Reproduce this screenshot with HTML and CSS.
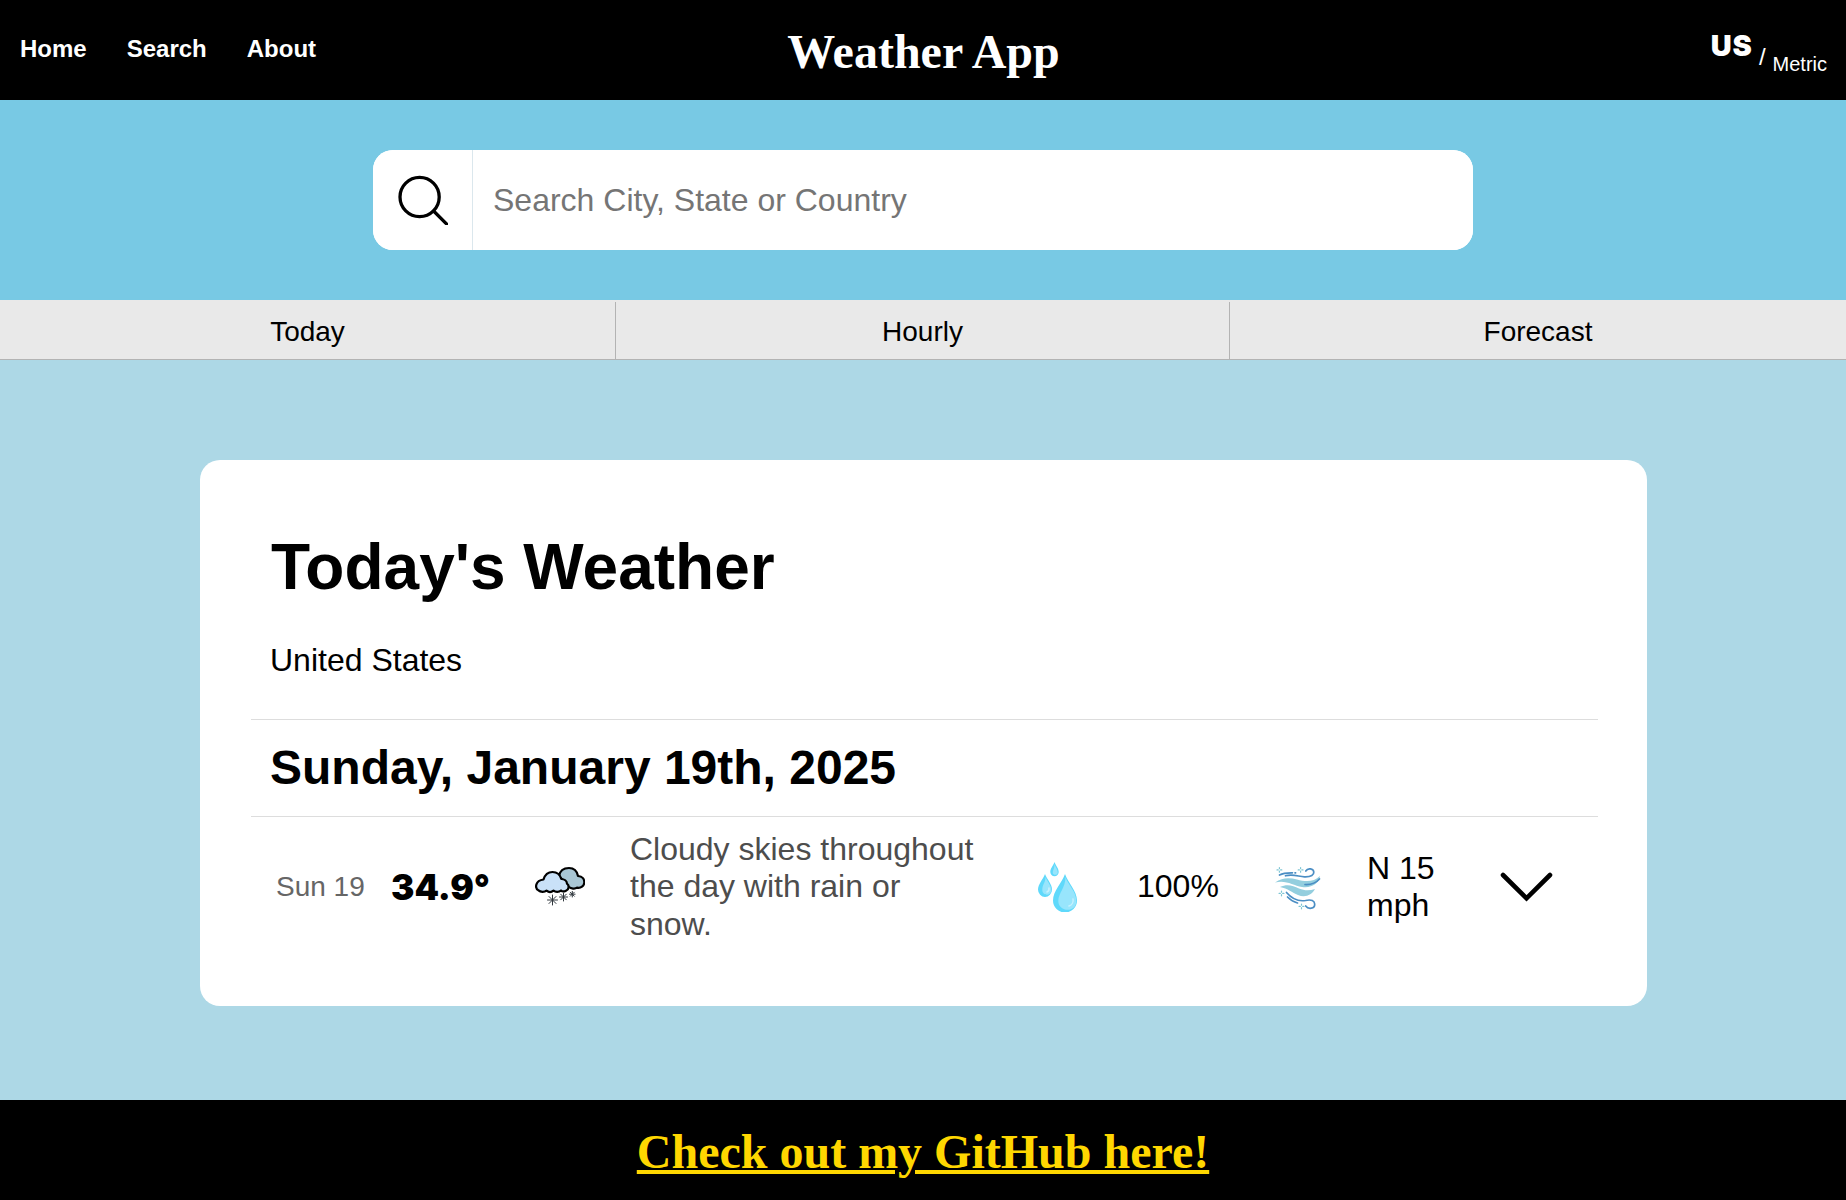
FILE: index.html
```html
<!DOCTYPE html>
<html lang="en">
<head>
<meta charset="utf-8">
<title>Weather App</title>
<link rel="stylesheet" href="styles.css">
</head>
<body>
<header class="header">
  <nav class="links"><a>Home</a><a>Search</a><a>About</a></nav>
  <h1 class="brand">Weather App</h1>
  <div class="units"><span class="us">US</span><span class="slash">/</span><span class="metric">Metric</span></div>
</header>
<section class="search-band">
  <div class="search">
    <button class="search-btn" aria-label="Search">
      <svg width="50" height="50" viewBox="0 0 50 50" fill="none" stroke="#000" stroke-width="3.300" stroke-linecap="round"><circle cx="21.600" cy="22" r="19.600"/><path d="M35.600 36 48.500 48.900"/></svg>
    </button>
    <input class="search-input" type="text" placeholder="Search City, State or Country">
  </div>
</section>
<nav class="tabs"><a>Today</a><a>Hourly</a><a>Forecast</a></nav>
<main class="main">
  <article class="card">
    <h2 class="title">Today's Weather</h2>
    <p class="place">United States</p>
    <h3 class="date">Sunday, January 19th, 2025</h3>
    <div class="row">
      <span class="day">Sun 19</span>
      <span class="temp">34.9°</span>
      <svg class="icon" width="50" height="50" viewBox="0 -4 50 50">
        <g stroke="#000" stroke-width="2.200" stroke-linejoin="round">
          <path fill="#a9c6d4" d="M24 10C25 4.500 29 2 34 2c5 0 8 3 9 8 4.500.500 6.500 3.500 6.300 6.500-.3 3.500-3.300 6-7.300 5.200-2 1.500-6 1-8-.7z"/>
          <path fill="#c9e1f8" d="M8.500 13.500C10 8.500 13 6 17.500 6S25 8.500 26.300 13c3 0 5.500 1.800 5.700 4.700 2.500 2 2 5.800-1 7-2 1-4 .8-5-.2-2 1.800-5.500 1.800-7.500.2-2 1.500-5 1.500-7 0-2 1.600-6 1.600-8-.3C-.5 22 .3 14.500 8.500 13.500z"/>
        </g>
        <g stroke="#30373d" stroke-width="1" stroke-linecap="round">
          <path d="M17.500 29v10M12.500 34h10M14 30.500l7 7M21 30.500l-7 7"/>
          <path d="M28.500 27v8M24.500 31h8M25.700 28.200l5.600 5.600M31.300 28.200l-5.600 5.600"/>
          <path d="M37.300 25.400v5.600M34.500 28.200h5.600M35.300 26.200l4 4M39.300 26.200l-4 4"/>
        </g>
      </svg>
      <p class="summary">Cloudy skies throughout the day with rain or snow.</p>
      <svg class="icon" width="50" height="50" viewBox="0 0 50 50">
        <g fill="#5fd9fb">
          <path d="M19.500 0c1.500 4 4.200 6.500 4.200 10a4.200 4.200 0 0 1-8.400 0C15.300 6.500 18 4 19.500 0z"/>
          <path d="M10 12c2 5.500 7 10 7 15.500a7 7.500 0 0 1-14 0C3 22 8 17.500 10 12z"/>
          <path d="M30 12c3 9 12 17 12 26.500a12 12 0 0 1-24 0C18 29 27 21 30 12z"/>
        </g>
        <g fill="#98e5fc">
          <path d="M19.500 2c1 3.500 3.300 5.500 3.300 8.500s-4.800 3-5 .5S19.500 7 19.500 2z"/>
          <path d="M10.500 15c2 5 5.800 8.500 5.800 13 0 6.500-9 6-9 0S10.500 21 10.500 15z"/>
          <path d="M30.500 15c2.500 8 10.800 14.500 10.800 24 0 12.500-18 11-18 0C23.300 31 30.500 26 30.500 15z"/>
        </g>
        <path d="M38 37c.7 3-1 6-4 7M14 26c.3 2-.6 3.500-2 4" fill="none" stroke="#c6f1fe" stroke-width="1.500" stroke-linecap="round"/>
      </svg>
      <span class="rain">100%</span>
      <svg class="icon" width="50" height="50" viewBox="0 0 50 50" fill="none" stroke-linecap="round">
        <path fill="#93cede" d="M0 20.500c8-5.500 15-4.500 22-3 9 2.500 17 2.500 23-3.500-1 7-8 12.500-18 11-9-1.500-16-7.500-27-4.500z"/>
        <path fill="#93cede" d="M5 25c7-3.500 13-1.500 19 1.500 6 2.500 11 2 16 .5-3 6-10 9-17 6C17 30.500 13 26.500 5 25z"/>
        <g stroke="#4b8ec4" stroke-width="1.700">
          <path d="M4.500 13c4-2.200 8-2.300 13-2.200M20 10.800h.6M10.500 13.800c8-2 13 .8 19 1 7 .2 9.500-2 9.300-4.800-.3-3.500-6-4.500-8-1"/>
          <path d="M30 22.500c6 .3 11-1.500 14.500-5.500M11.500 30.500c6 7 13 9 19 8 6-1.500 9 .5 9.200 3.500.3 5-6.500 5.500-9 2M12.500 35c3 3 6 5 10 6"/>
        </g>
        <path d="M4.400 5.500v1.200M4.400 9v1.200M2 7.900h1.200M5.600 7.900h1.200M25.600 5.500v1.200M25.600 9v1.200M23.200 7.900h1.200M26.800 7.900H28M6.500 29v1.200M6.500 32.600v1.200M4.100 31.400h1.200M7.700 31.400h1.200M26.500 42v1.200M26.500 45.600v1.200M24.100 44.400h1.200M27.700 44.400h1.200" stroke="#7ec6d4" stroke-width="1.200"/>
      </svg>
      <span class="wind">N 15 mph</span>
      <svg class="icon" width="54" height="50" viewBox="0 0 54 50" fill="none" stroke="#000" stroke-width="4.600" stroke-linecap="round"><path d="M3 13 26.500 36.300 50 13"/></svg>
    </div>
  </article>
</main>
<footer class="footer"><a>Check out my GitHub here!</a></footer>
</body>
</html>
```

FILE: styles.css
```css
* { box-sizing: border-box; }
body {
  margin: 0;
  height: 1200px;
  display: flex;
  flex-direction: column;
  font-family: "Liberation Sans", Arial, sans-serif;
  color: #000;
  background: #add8e6;
}
h1, h2, h3, p { margin: 0; }
.header {
  flex: none;
  height: 100px;
  display: grid;
  grid-template-columns: 1fr auto 1fr;
  align-items: center;
  padding: 0 19px 0 20px;
  background: #000;
  color: #fff;
}
.links { display: flex; gap: 40px; padding-bottom: 2px; font-size: 24px; font-weight: bold; }
.brand { font: bold 48px/54px "Liberation Serif", "Times New Roman", serif; padding-top: 4px; }
.units { display: flex; justify-content: flex-end; align-items: center; height: 100px; }
.us { font: 900 29px/32px Inter, "Arial Black", sans-serif; letter-spacing: 1px; padding-bottom: 9px; margin-right: 6px; }
.slash { font-size: 24px; line-height: 28px; padding-top: 13px; margin-right: 7px; }
.metric { font-size: 20px; line-height: 24px; padding-top: 28px; }
.search-band {
  flex: none;
  height: 200px;
  display: flex;
  justify-content: center;
  align-items: center;
  background: #78c9e4;
}
.search { display: flex; width: 1100px; height: 100px; border-radius: 20px; background: #fff; overflow: hidden; }
.search-btn {
  width: 100px;
  padding: 0;
  border: 0;
  border-right: 1px solid #dbe7ed;
  background: #fff;
  display: flex;
  align-items: center;
  justify-content: center;
}
.search-input { flex: 1; border: 0; padding: 0 20px; font: 32px "Liberation Sans", Arial, sans-serif; outline: 0; }
.search-input::placeholder { color: #757575; }
.tabs {
  flex: none;
  height: 60px;
  display: grid;
  grid-template-columns: 616px 614px 1fr;
  background: #e9e9e9;
  border-bottom: 1px solid #b3b3b3;
}
.tabs a {
  display: flex;
  align-items: center;
  justify-content: center;
  margin-top: 2px;
  padding-top: 3px;
  font-size: 28px;
  border-right: 1px solid #b3b3b3;
}
.tabs a:last-child { border: 0; }
.main { flex: 1; padding: 100px 199px 0 200px; }
.card { height: 546px; padding: 70px 49px 0 51px; border-radius: 20px; background: #fff; }
.title { padding-left: 20px; font-size: 64px; line-height: 74px; }
.place { margin-top: 38px; padding: 0 19px 40px; font-size: 32px; line-height: 37px; }
.date {
  height: 98px;
  padding-left: 19px;
  border: solid #ddd;
  border-width: 1px 0;
  font-size: 48px;
  line-height: 95px;
}
.row {
  display: grid;
  grid-template-columns: 115px 144px 95px 405px 102px 138px 92px 133px 54px;
  align-items: center;
  margin-top: 14px;
  padding-left: 25px;
  font-size: 32px;
  line-height: 37.333px;
}
.day { font-size: 28px; color: #666; }
.temp { font: 900 35px/40px Inter, "Arial Black", sans-serif; }
.icon { display: block; }
.summary { width: 350px; color: #4d4d4d; }
.wind { width: 90px; }
.footer {
  flex: none;
  height: 100px;
  display: flex;
  align-items: center;
  justify-content: center;
  padding-top: 4px;
  background: #000;
  color: #ffd700;
  font: bold 48px/54px "Liberation Serif", "Times New Roman", serif;
}
.footer a { text-decoration: underline; text-decoration-thickness: 4px; }
```
